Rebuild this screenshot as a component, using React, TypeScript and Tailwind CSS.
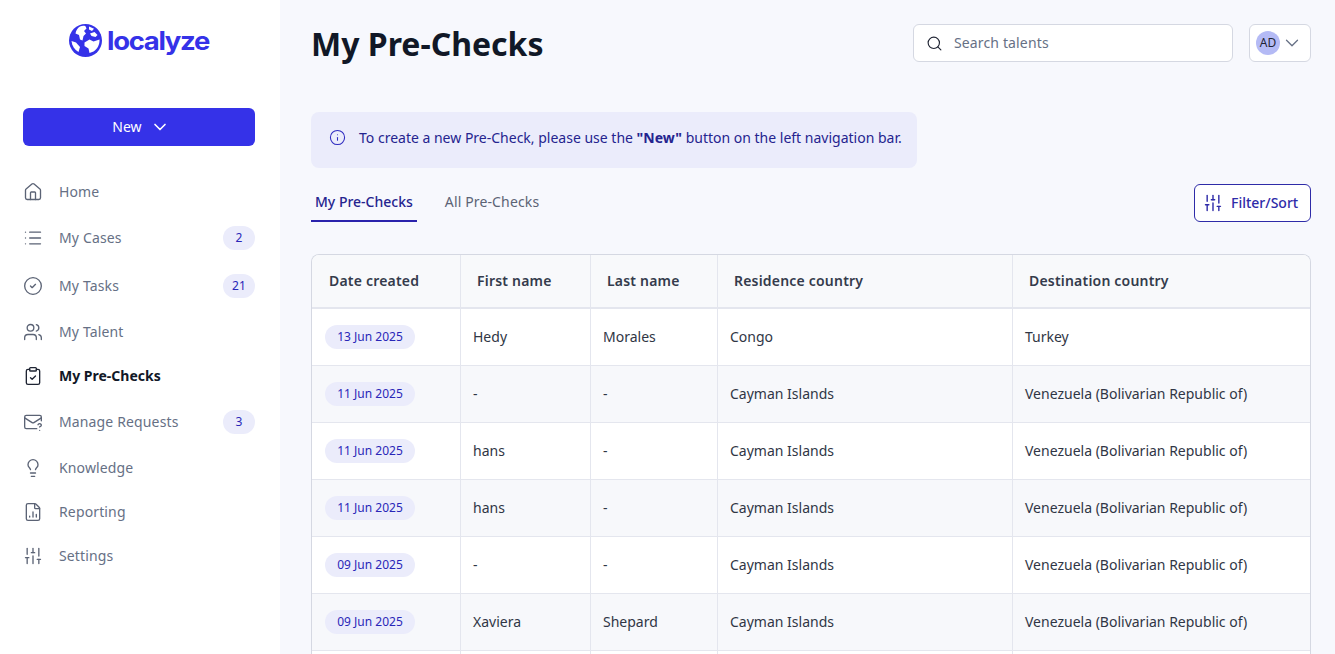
import React from 'react';
import { ChevronDown, Search, Info, House, List, CircleCheck, Users, ClipboardCheck, MailQuestionMark, Lightbulb, FileChartColumn, SlidersVertical } from 'lucide-react';

const navItems = [
  { label: 'Home', icon: House },
  { label: 'My Cases', icon: List, badge: '2' },
  { label: 'My Tasks', icon: CircleCheck, badge: '21' },
  { label: 'My Talent', icon: Users },
  { label: 'My Pre-Checks', icon: ClipboardCheck, active: true },
  { label: 'Manage Requests', icon: MailQuestionMark, badge: '3' },
  { label: 'Knowledge', icon: Lightbulb },
  { label: 'Reporting', icon: FileChartColumn },
  { label: 'Settings', icon: SlidersVertical },
];

const rows = [
  ['13 Jun 2025', 'Hedy', 'Morales', 'Congo', 'Turkey'],
  ['11 Jun 2025', '-', '-', 'Cayman Islands', 'Venezuela (Bolivarian Republic of)'],
  ['11 Jun 2025', 'hans', '-', 'Cayman Islands', 'Venezuela (Bolivarian Republic of)'],
  ['11 Jun 2025', 'hans', '-', 'Cayman Islands', 'Venezuela (Bolivarian Republic of)'],
  ['09 Jun 2025', '-', '-', 'Cayman Islands', 'Venezuela (Bolivarian Republic of)'],
  ['09 Jun 2025', 'Xaviera', 'Shepard', 'Cayman Islands', 'Venezuela (Bolivarian Republic of)'],
];

const Logo = () => (
  <div className="flex items-center gap-[5px]">
    <svg width="33" height="33" viewBox="0 0 33 33">
      <circle cx="16.5" cy="16.5" r="16.5" fill="#3532e8" />
      <path d="M11 2.500c2-.8 4-.8 5.500-.3l1 2.300-2.500 2.500 2 2.500-2.500 2.500-1 4.500-2.500-1-1-4.500-3.500-1.500C7 6.500 8.500 4 11 2.500Z" fill="#fff" />
      <path d="M20 2.500l5 2.200-2 2.300-3-1.500Z" fill="#fff" />
      <path d="M2.500 17l4.500 1.500 4 4.500-1.500 5C5.500 25.500 3 22 2.500 17Z" fill="#fff" />
      <path d="M15.500 18.500l5-3 4 2 6-2c.3 5-2 9.500-6 12l-4 1.500-1-4.500-4-2.500Z" fill="#fff" />
      <path d="M21 9.500l4.500-1.500 3 3-2 2-4-1Z" fill="#fff" />
    </svg>
    <span className="mt-[1px] w-[102px] origin-left scale-x-[1.1] font-['Inter',sans-serif] text-[25px] font-bold leading-none tracking-[-1.2px] text-[#3532e8]">localyze</span>
  </div>
);

export default function App() {
  return (
    <div className="flex h-screen overflow-hidden bg-[#f7f8fd] font-['Noto_Sans',sans-serif] text-[14px] text-[#303645]">
      <aside className="w-[280px] shrink-0 bg-white pl-[23px] pr-[25px] pt-[24px]">
        <div className="flex justify-center">
          <Logo />
        </div>
        <button className="mt-[51px] flex h-[38px] w-full items-center justify-center gap-[8px] rounded-[6px] bg-[#3532e8] pl-[4px] text-white">
          <span className="pb-[2px]">New</span>
          <ChevronDown className="h-[20px] w-[20px]" strokeWidth={2} />
        </button>
        <nav className="mt-[24px] flex flex-col">
          {navItems.map(item => {
            const Icon = item.icon;
            return (
              <div key={item.label} className={`flex items-center gap-[16px] ${item.badge ? 'h-[48px]' : 'h-[44px]'} ${item.active ? 'font-bold text-[#111827]' : 'tracking-[0.14px] text-[#667085]'}`}>
                <Icon className={`h-[20px] w-[20px] ${item.active ? 'text-[#1f2433]' : 'text-[#5b6375]'}`} strokeWidth={1.6} />
                <span className="flex-1 pb-[2px]">{item.label}</span>
                {item.badge && (
                  <span className="flex h-[24px] w-[32px] items-center justify-center rounded-full bg-[#ebecfb] text-[12px] text-[#2a27b8]">{item.badge}</span>
                )}
              </div>
            );
          })}
        </nav>
      </aside>

      <main className="flex min-w-0 flex-1 flex-col pl-[31px] pr-[24px]">
        <header className="flex h-[88px] shrink-0 items-center justify-between">
          <h1 className="text-[32px] font-bold leading-none text-[#111827]">My Pre-Checks</h1>
          <div className="flex items-center gap-[16px] self-start pt-[24px]">
            <div className="flex h-[38px] w-[320px] items-center gap-[11px] rounded-[6px] border border-[#d5d8e2] bg-white pl-[12px] tracking-[0.14px] text-[#667085]">
              <Search className="h-[17px] w-[17px] text-[#1f2433]" strokeWidth={1.6} />
              <span className="pb-[2px]">Search talents</span>
            </div>
            <div className="flex h-[38px] w-[62px] items-center gap-[1px] rounded-[6px] border border-[#d5d8e2] bg-white pl-[6px]">
              <span className="flex h-[24px] w-[24px] items-center justify-center rounded-full bg-[#b4baf5] text-[12px] text-[#1f2433]">AD</span>
              <ChevronDown className="h-[22px] w-[22px] text-[#667085]" strokeWidth={1.4} />
            </div>
          </div>
        </header>

        <div className="mt-[24px] flex h-[56px] w-[606px] shrink-0 items-center gap-[13px] rounded-[8px] bg-[#ebecfb] pb-[5px] pl-[18px] text-[#25248f]">
          <Info className="h-[17px] w-[17px] text-[#2e2bc0]" strokeWidth={1.5} />
          <span>To create a new Pre-Check, please use the <b>"New"</b> button on the left navigation bar.</span>
        </div>

        <div className="mt-[16px] flex h-[38px] shrink-0 items-start justify-between">
          <div className="flex gap-[24px]">
            <div className="flex h-[38px] items-center border-b-2 border-[#2a22ac] px-[4px] pb-[2px] font-medium text-[#25248f]">My Pre-Checks</div>
            <div className="flex h-[38px] items-center px-[4px] pb-[4px] tracking-[0.14px] text-[#5b6375]">All Pre-Checks</div>
          </div>
          <button className="flex h-[38px] w-[117px] items-center gap-[8px] rounded-[6px] border border-[#2e2ba8] bg-white pl-[8px] font-medium text-[#2e2ba8]">
            <SlidersVertical className="h-[20px] w-[20px]" strokeWidth={1.7} />
            <span className="pb-[2px]">Filter/Sort</span>
          </button>
        </div>

        <div className="mt-[32px] flex-1 overflow-hidden rounded-t-[8px] border border-b-0 border-[#d5d8e2] bg-white">
          <table className="w-full table-fixed border-collapse">
            <colgroup>
              <col className="w-[148px]" />
              <col className="w-[130px]" />
              <col className="w-[127px]" />
              <col className="w-[295px]" />
              <col />
            </colgroup>
            <thead>
              <tr className="h-[53px] border-b-2 border-[#e4e6ee] bg-[#f8f9fb] text-left tracking-[0.2px] text-[#343b4c]">
                <th className="pb-[2px] pl-[17px] font-semibold">Date created</th>
                <th className="border-l border-[#e4e6ee] pb-[2px] pl-[16.5px] font-semibold">First name</th>
                <th className="border-l border-[#e4e6ee] pb-[2px] pl-[16.5px] font-semibold">Last name</th>
                <th className="border-l border-[#e4e6ee] pb-[2px] pl-[16.5px] font-semibold">Residence country</th>
                <th className="border-l border-[#e4e6ee] pb-[2px] pl-[16.5px] font-semibold">Destination country</th>
              </tr>
            </thead>
            <tbody>
              {rows.map((row, i) => (
                <tr key={i} className={`h-[57px] border-b border-[#e4e6ee] ${i % 2 === 1 ? 'bg-[#f7f8fb]' : 'bg-white'}`}>
                  <td className="pl-[13px]">
                    <span className="inline-flex h-[24px] w-[90px] items-center justify-center rounded-full bg-[#ebecfb] text-[12px] text-[#2a27b8]">{row[0]}</span>
                  </td>
                  {row.slice(1).map((cell, j) => (
                    <td key={j} className="border-l border-[#e4e6ee] pl-[12.5px]">{cell}</td>
                  ))}
                </tr>
              ))}
              <tr className="h-[57px]">
                <td />
                <td className="border-l border-[#e4e6ee]" />
                <td className="border-l border-[#e4e6ee]" />
                <td className="border-l border-[#e4e6ee]" />
                <td className="border-l border-[#e4e6ee]" />
              </tr>
            </tbody>
          </table>
        </div>
      </main>
    </div>
  );
}
